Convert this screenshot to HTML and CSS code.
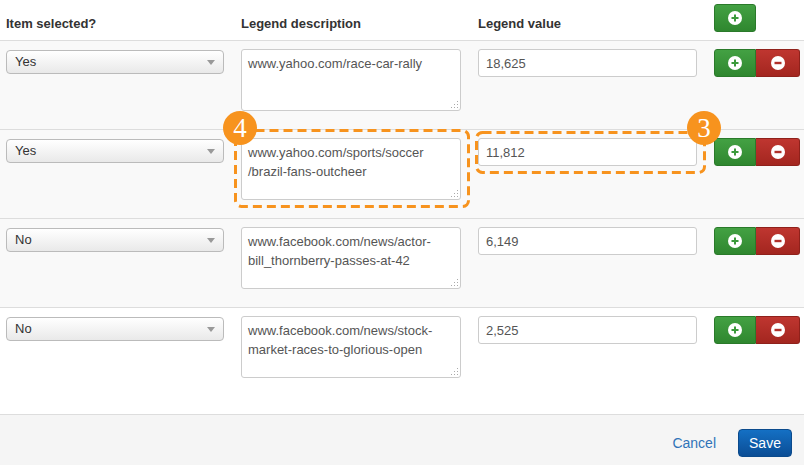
FILE: index.html
```html
<!DOCTYPE html>
<html>
<head>
<meta charset="utf-8">
<link rel="stylesheet" href="styles.css">
</head>
<body>
<div class="page">
  <div class="head row-grid">
    <div class="th">Item selected?</div>
    <div class="th">Legend description</div>
    <div class="th">Legend value</div>
    <div class="btns"><button class="btn add"><svg class="ico" viewBox="0 0 14 14"><circle cx="7" cy="7" r="7" fill="#fff"/><path d="M7 3.5v7M3.5 7h7" stroke="#3b9a3b" stroke-width="2"/></svg></button></div>
  </div>

  <div class="row row-grid shade">
    <div class="sel"><span>Yes</span></div>
    <textarea class="ta">www.yahoo.com/race-car-rally</textarea>
    <input class="inp" value="18,625">
    <div class="btns group"><button class="btn add"><svg class="ico" viewBox="0 0 14 14"><circle cx="7" cy="7" r="7" fill="#fff"/><path d="M7 3.5v7M3.5 7h7" stroke="#3b9a3b" stroke-width="2"/></svg></button><button class="btn del"><svg class="ico" viewBox="0 0 14 14"><circle cx="7" cy="7" r="7" fill="#fff"/><path d="M3.5 7h7" stroke="#b0302a" stroke-width="2.4"/></svg></button></div>
  </div>

  <div class="row row-grid shade">
    <div class="sel"><span>Yes</span></div>
    <textarea class="ta">www.yahoo.com/sports/soccer
/brazil-fans-outcheer</textarea>
    <input class="inp" value="11,812">
    <div class="btns group"><button class="btn add"><svg class="ico" viewBox="0 0 14 14"><circle cx="7" cy="7" r="7" fill="#fff"/><path d="M7 3.5v7M3.5 7h7" stroke="#3b9a3b" stroke-width="2"/></svg></button><button class="btn del"><svg class="ico" viewBox="0 0 14 14"><circle cx="7" cy="7" r="7" fill="#fff"/><path d="M3.5 7h7" stroke="#b0302a" stroke-width="2.4"/></svg></button></div>
  </div>

  <div class="row row-grid shade">
    <div class="sel"><span>No</span></div>
    <textarea class="ta">www.facebook.com/news/actor-bill_thornberry-passes-at-42</textarea>
    <input class="inp" value="6,149">
    <div class="btns group"><button class="btn add"><svg class="ico" viewBox="0 0 14 14"><circle cx="7" cy="7" r="7" fill="#fff"/><path d="M7 3.5v7M3.5 7h7" stroke="#3b9a3b" stroke-width="2"/></svg></button><button class="btn del"><svg class="ico" viewBox="0 0 14 14"><circle cx="7" cy="7" r="7" fill="#fff"/><path d="M3.5 7h7" stroke="#b0302a" stroke-width="2.4"/></svg></button></div>
  </div>

  <div class="row row-grid last">
    <div class="sel"><span>No</span></div>
    <textarea class="ta">www.facebook.com/news/stock-market-races-to-glorious-open</textarea>
    <input class="inp" value="2,525">
    <div class="btns group"><button class="btn add"><svg class="ico" viewBox="0 0 14 14"><circle cx="7" cy="7" r="7" fill="#fff"/><path d="M7 3.5v7M3.5 7h7" stroke="#3b9a3b" stroke-width="2"/></svg></button><button class="btn del"><svg class="ico" viewBox="0 0 14 14"><circle cx="7" cy="7" r="7" fill="#fff"/><path d="M3.5 7h7" stroke="#b0302a" stroke-width="2.4"/></svg></button></div>
  </div>

  <div class="foot">
    <a class="cancel" href="#">Cancel</a>
    <button class="save">Save</button>
  </div>

  <svg class="callout box4" viewBox="0 0 236 79"><rect x="1.5" y="1.5" width="233" height="76" rx="6" fill="none" stroke="#f7931e" stroke-width="3" stroke-dasharray="9 5"/></svg>
  <svg class="callout box3" viewBox="0 0 231 43"><rect x="1.5" y="1.5" width="228" height="40" rx="6" fill="none" stroke="#f7931e" stroke-width="3" stroke-dasharray="9 5"/></svg>
  <div class="badge badge4">4</div>
  <div class="badge badge3">3</div>
</div>
</body>
</html>
```

FILE: styles.css
```css
* { box-sizing: border-box; }
html, body { margin: 0; padding: 0; background: #fff; }
body { font-family: "Liberation Sans", Arial, sans-serif; font-size: 13px; color: #333; }
.page { position: relative; width: 804px; height: 465px; overflow: hidden; }

.row-grid {
  display: grid;
  grid-template-columns: 218px 220px 219px 86px;
  column-gap: 17px;
  padding-left: 6px;
}
.head { height: 41px; border-bottom: 1px solid #ddd; align-items: start; }
.th { font-weight: bold; font-size: 13px; color: #333; padding-top: 16px; }
.head .btns { padding-top: 4px; }

.row { height: 89px; border-bottom: 1px solid #ddd; padding-top: 8px; align-items: start; }
.row.shade { background: #f9f9f9; }
.row.last { height: 107px; background: #fff; }

.sel {
  position: relative;
  margin-top: 1px;
  height: 24px;
  border: 1px solid #bbb;
  border-radius: 4px;
  background: linear-gradient(#ffffff, #e9e9e9);
  color: #333;
  padding: 4px 8px;
  line-height: 14px;
}
.sel::after {
  content: "";
  position: absolute;
  right: 8px; top: 9px;
  border-left: 4px solid transparent;
  border-right: 4px solid transparent;
  border-top: 5px solid #999;
}

.ta {
  display: block;
  width: 220px; height: 62px;
  margin: 0;
  border: 1px solid #ccc;
  border-radius: 3px;
  background-color: #fff;
  background-image:
    linear-gradient(#aaa, #aaa), linear-gradient(#aaa, #aaa), linear-gradient(#aaa, #aaa),
    linear-gradient(#aaa, #aaa), linear-gradient(#aaa, #aaa), linear-gradient(#aaa, #aaa);
  background-size: 1px 1px;
  background-repeat: no-repeat;
  background-position:
    right 2px bottom 2px, right 5px bottom 2px, right 8px bottom 2px,
    right 2px bottom 5px, right 5px bottom 5px, right 2px bottom 8px;
  color: #555;
  font-family: "Liberation Sans", Arial, sans-serif;
  font-size: 13px;
  line-height: 19px;
  padding: 4px 6px;
  resize: none;
  overflow: hidden;
}
.inp {
  display: block;
  width: 219px; height: 28px;
  margin: 0;
  border: 1px solid #ccc;
  border-radius: 3px;
  background: #fff;
  color: #555;
  font-family: "Liberation Sans", Arial, sans-serif;
  font-size: 13px;
  padding: 4px 7px;
}

.btns { display: flex; }
.btn {
  display: flex; align-items: center; justify-content: center;
  height: 28px; width: 42px;
  margin: 0; padding: 0;
  border-radius: 3px;
  cursor: pointer;
}
.btn.add {
  background: linear-gradient(#43a143, #2f872f);
  border: 1px solid #2a7a2a;
}
.btn.del {
  width: 44px;
  background: linear-gradient(#bf3630, #a3261f);
  border: 1px solid #8f211b;
}
.group .add { border-radius: 3px 0 0 3px; }
.group .del { border-radius: 0 3px 3px 0; border-left: none; }
.ico { width: 14px; height: 14px; display: block; }

.foot {
  height: 51px;
  background: #f5f5f5;
  display: flex;
  justify-content: flex-end;
  align-items: flex-start;
  padding-top: 14px;
  padding-right: 12px;
  gap: 22px;
}
.cancel { color: #2f73b8; text-decoration: none; font-size: 14px; line-height: 28px; }
.save {
  height: 28px; width: 54px;
  border: 1px solid #0b4a8c;
  border-radius: 4px;
  background: linear-gradient(#1470c4, #0b4d95);
  color: #fff;
  font-family: "Liberation Sans", Arial, sans-serif;
  font-size: 14px;
  padding: 0;
}

.callout { position: absolute; overflow: visible; }
.box4 { left: 234px; top: 129px; width: 236px; height: 79px; }
.box3 { left: 475px; top: 131px; width: 231px; height: 43px; }
.badge {
  position: absolute;
  width: 34px; height: 34px;
  border-radius: 50%;
  background: #f7931e;
  color: #fff;
  font-family: "Liberation Serif", "Times New Roman", serif;
  font-size: 27px;
  line-height: 35px;
  text-align: center;
}
.badge4 { left: 223px; top: 111px; }
.badge3 { left: 687px; top: 111px; }
```
